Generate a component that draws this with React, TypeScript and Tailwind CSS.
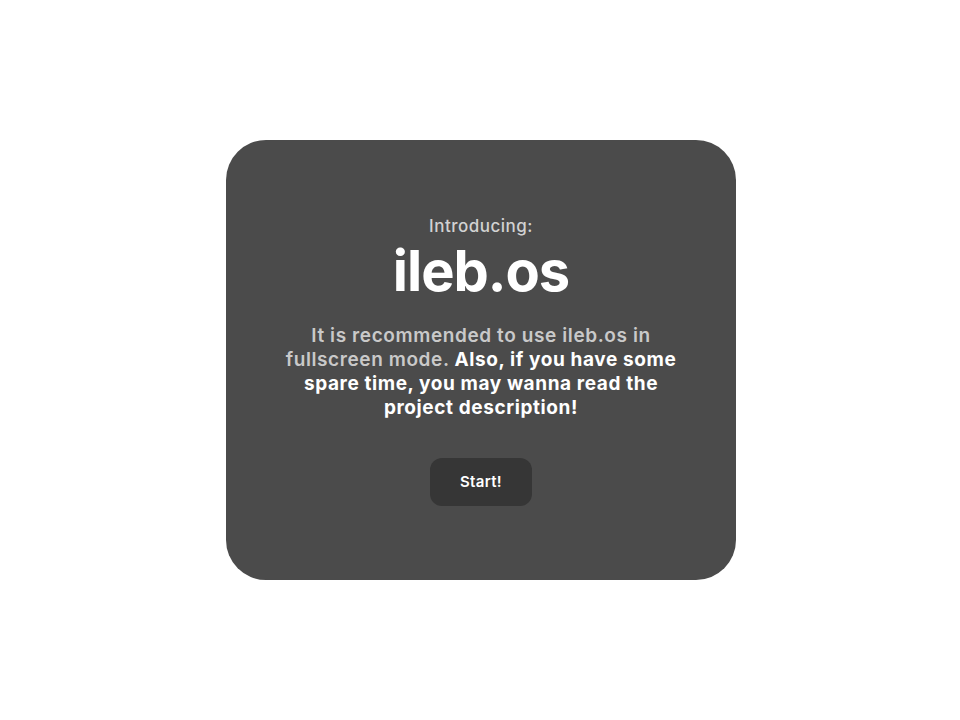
export default function App() {
  return (
    <div className="w-[960px] h-[720px] bg-white flex items-center justify-center pl-[2px] font-['Inter',sans-serif]">
      <div className="w-[510px] h-[440px] rounded-[40px] bg-[#4b4b4b] flex flex-col items-center pt-[73px]">
        <p className="text-[17px] leading-[26px] text-[#d2d2d2] font-medium tracking-[0.5px]">Introducing:</p>
        <h1 className="text-[56px] leading-[64px] font-bold text-white tracking-[-1px]">ileb.os</h1>
        <p className="mt-[21px] w-[402px] text-center text-[19px] leading-[24px] font-semibold text-[#c9c9c9] tracking-[0.6px]">
          It is recommended to use ileb.os in fullscreen mode.{' '}
          <span className="font-bold text-white">
            Also, if you have some spare time, you may wanna read the project description!
          </span>
        </p>
        <button className="mt-[38px] w-[102px] h-[48px] rounded-[12px] bg-[#363636] text-white text-[15px] font-semibold tracking-[0.3px]">
          Start!
        </button>
      </div>
    </div>
  );
}
